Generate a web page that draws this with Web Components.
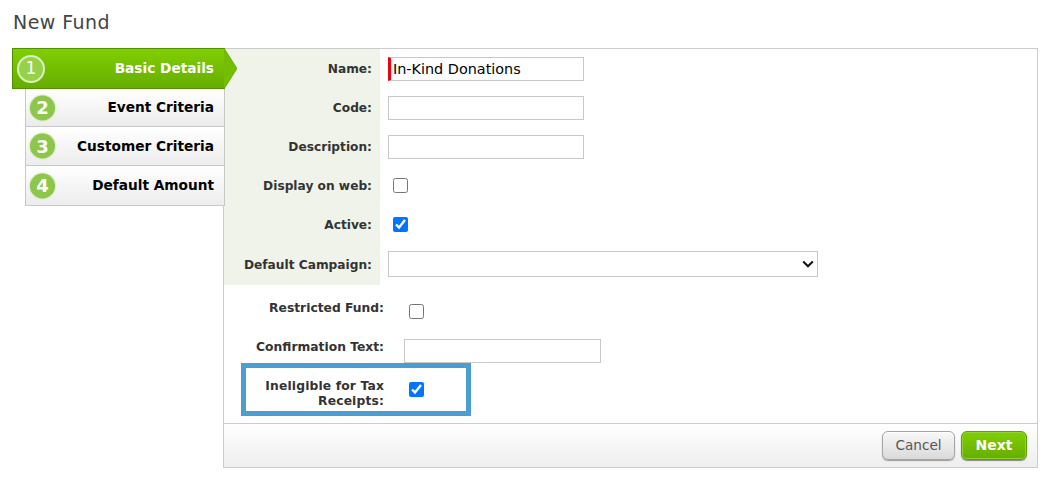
<!DOCTYPE html>
<html>
<head>
<meta charset="utf-8">
<title>New Fund</title>
<style>
	html, body { margin: 0; background: #fff; }
	body { font-family: "DejaVu Sans", Verdana, sans-serif; color: #333; }
</style>
</head>
<body>
<fund-page>
	<span slot="title">New Fund</span>
	<fund-wizard slot="wizard">
		<wizard-step num="1" active>Basic Details</wizard-step>
		<wizard-step num="2">Event Criteria</wizard-step>
		<wizard-step num="3">Customer Criteria</wizard-step>
		<wizard-step num="4">Default Amount</wizard-step>
	</fund-wizard>
	<fund-panel slot="panel">
		<form-row slot="main" label="Name:"><text-box value="In-Kind Donations" required></text-box></form-row>
		<form-row slot="main" label="Code:"><text-box></text-box></form-row>
		<form-row slot="main" label="Description:"><text-box></text-box></form-row>
		<form-row slot="main" label="Display on web:"><check-box style="margin-left:5px"></check-box></form-row>
		<form-row slot="main" label="Active:"><check-box style="margin-left:5px" checked></check-box></form-row>
		<form-row slot="main" label="Default Campaign:" tall><select-box></select-box></form-row>

		<extra-row slot="extra" label="Restricted Fund:" style="height:39px"><check-box style="margin-top:14px"></check-box></extra-row>
		<extra-row slot="extra" label="Confirmation Text:" style="height:39px"><text-box style="width:197px;margin-left:-5px;margin-top:10px"></text-box></extra-row>
		<extra-row slot="extra" label="Ineligible for Tax Receipts:" marked><check-box style="margin-top:-2px" checked></check-box></extra-row>

		<fund-button slot="footer">Cancel</fund-button>
		<fund-button slot="footer" primary>Next</fund-button>
	</fund-panel>
</fund-page>

<script>
	const define = (name, html) => {
		customElements.define(name, class extends HTMLElement {
			constructor() {
				super();
				this.attachShadow({ mode: "open" }).innerHTML = typeof html === "function" ? html(this) : html;
			}
		});
	};

	define("fund-page", `
		<style>
			:host { display: block; padding: 12px 19px 0 12px; }
			h1 { margin: 0 0 15px 1px; height: 21px; font: 400 19px/21px "DejaVu Sans", sans-serif; color: #444; letter-spacing: .45px; }
			.body { display: flex; align-items: flex-start; }
		</style>
		<h1><slot name="title"></slot></h1>
		<div class="body"><slot name="wizard"></slot><slot name="panel"></slot></div>
	`);

	define("fund-wizard", `
		<style>
			:host { display: block; flex: none; width: 213px; margin-right: -2px; position: relative; z-index: 1; }
		</style>
		<slot></slot>
	`);

	define("wizard-step", (el) => {
		const active = el.hasAttribute("active");
		return `
		<style>
			:host { display: flex; align-items: center; justify-content: flex-end; box-sizing: border-box; position: relative;
				font: 700 13.7px/16px "DejaVu Sans", sans-serif; color: #000; }
			:host(:not([active])) { height: 39px; margin-left: 13px; padding-right: 10px; background: linear-gradient(#fff, #ececec);
				border: 1px solid #c8c8c8; border-top: 0; }
			:host([active]) { height: 41px; padding-right: 10px; color: #fff; background: linear-gradient(#80cf02, #66ad00); border: 1px solid #4f8f00; }
			:host([num="2"]) { height: 38px; }
			:host([num="4"]) { height: 40px; }
			:host(:not([num="3"])) .label { margin-top: -2px; }
			.num { position: absolute; top: 50%; transform: translateY(-50%); display: flex; align-items: center; justify-content: center;
				box-sizing: border-box; border-radius: 50%; color: #fff; font: 700 18px/1 "DejaVu Sans", sans-serif; }
			:host(:not([active])) .num { left: 4px; width: 25px; height: 25px; background: #8cc64a; box-shadow: 0 0 1px 1px #d9ecc0; }
			:host([active]) .num { left: 4px; width: 28px; height: 28px; background: #95d24a; border: 2px solid #dcefc0; font-weight: 400; font-size: 17px; }
			.tip { position: absolute; left: 100%; top: -1px; width: 13px; height: 41px; }
		</style>
		<span class="num">${el.getAttribute("num")}</span>
		<span class="label"><slot></slot></span>
		${active ? `<svg class="tip" viewBox="0 0 13 41"><path d="M0 0 L13 20.5 L0 41Z" fill="#74bd01"/><path d="M0 0 L13 20.5 L0 41" fill="none" stroke="#5f9f00" stroke-width=".7"/></svg>` : ""}
		`;
	});

	define("fund-panel", `
		<style>
			:host { display: flex; flex-direction: column; flex: none; box-sizing: border-box; width: 815px; height: 420px; border: 1px solid #ccc; }
			.main { background: linear-gradient(90deg, #f0f3ea 156px, transparent 156px); height: 236px; flex: none; display: flex; flex-direction: column; }
			.extra { flex: 1; }
			.footer { height: 44px; box-sizing: border-box; flex: none; border-top: 1px solid #ccc; background: linear-gradient(#fff, #eee);
				display: flex; align-items: center; justify-content: flex-end; gap: 6px; padding: 0 10px 1px; }
		</style>
		<div class="main"><slot name="main"></slot></div>
		<div class="extra"><slot name="extra"></slot></div>
		<div class="footer"><slot name="footer"></slot></div>
	`);

	define("form-row", (el) => `
		<style>
			:host { display: flex; align-items: center; height: 39px; }
			:host([tall]) { height: 41px; }
			:host([tall]) ::slotted(select-box) { margin-top: -1px; }
			label { box-sizing: border-box; width: 148px; margin-right: 16px; padding-top: 2px; flex: none; text-align: right; font: 700 12.2px/15px "DejaVu Sans", sans-serif; color: #333; }
		</style>
		<label>${el.getAttribute("label")}</label><slot></slot>
	`);

	define("extra-row", (el) => `
		<style>
			:host { display: flex; align-items: flex-start; font: 700 12.3px/15px "DejaVu Sans", sans-serif; color: #333; box-sizing: border-box; }
			label { flex: none; width: 160px; text-align: right; margin-top: 16px; box-sizing: border-box; }
			.ctl { margin-left: 25px; margin-top: 5px; display: block; }
			:host([marked]) { width: 230px; height: 53px; margin-left: 17px; border: 5px solid #4c9ed0; }
			:host([marked]) label { width: 138px; margin-top: 11px; letter-spacing: .15px; }
			:host([marked]) .ctl { margin-top: 16px; }
		</style>
		<label>${el.getAttribute("label")}</label><div class="ctl"><slot></slot></div>
	`);

	define("text-box", (el) => `
		<style>
			:host { display: block; width: 196px; height: 24px; }
			input { display: block; box-sizing: border-box; width: 100%; height: 100%; margin: 0; padding: 0 3px; outline: 0;
				border: 1px solid #c8c8c8; border-radius: 0; background: #fff; color: #000; font: 14.4px "DejaVu Sans", sans-serif; }
			:host([required]) input { border-left: 3px solid #ee0010; padding-left: 2px; }
		</style>
		<input type="text" value="${el.getAttribute("value") || ""}">
	`);

	define("check-box", (el) => `
		<style>
			:host { display: block; width: 15px; height: 15px; }
			input { display: block; width: 15px; height: 15px; margin: 0; accent-color: #0075ff; }
		</style>
		<input type="checkbox" ${el.hasAttribute("checked") ? "checked" : ""}>
	`);

	define("select-box", `
		<style>
			:host { display: block; width: 430px; height: 26px; position: relative; }
			.box { box-sizing: border-box; height: 100%; border: 1px solid #c8c8c8; background: #fff; display: flex; align-items: center; justify-content: flex-end; padding-right: 3px; }
			svg { width: 12px; height: 8px; }
		</style>
		<div class="box"><svg viewBox="0 0 12 8"><path d="M1.2 1.5 L6 6.3 L10.8 1.5" fill="none" stroke="#111" stroke-width="2"/></svg></div>
	`);

	define("fund-button", `
		<style>
			:host { display: flex; align-items: center; justify-content: center; box-sizing: border-box; height: 29px; width: 73px; padding-top: 2px; border-radius: 6px;
				font: 400 13.6px/1 "DejaVu Sans", sans-serif; color: #555; border: 1px solid #a5a5a5;
				background: linear-gradient(#f8f8f8, #dadada); box-shadow: 0 1px 1px #999, inset 0 1px 0 #fff; }
			:host([primary]) { width: 66px; padding-top: 0; font-size: 14px; font-weight: 700; color: #fff; border-color: #5e9f00;
				background: linear-gradient(#80cf02, #66ad00); box-shadow: 0 1px 1px #888, inset 0 0 0 1px #8fd42a; }
		</style>
		<slot></slot>
	`);
</script>
</body>
</html>
